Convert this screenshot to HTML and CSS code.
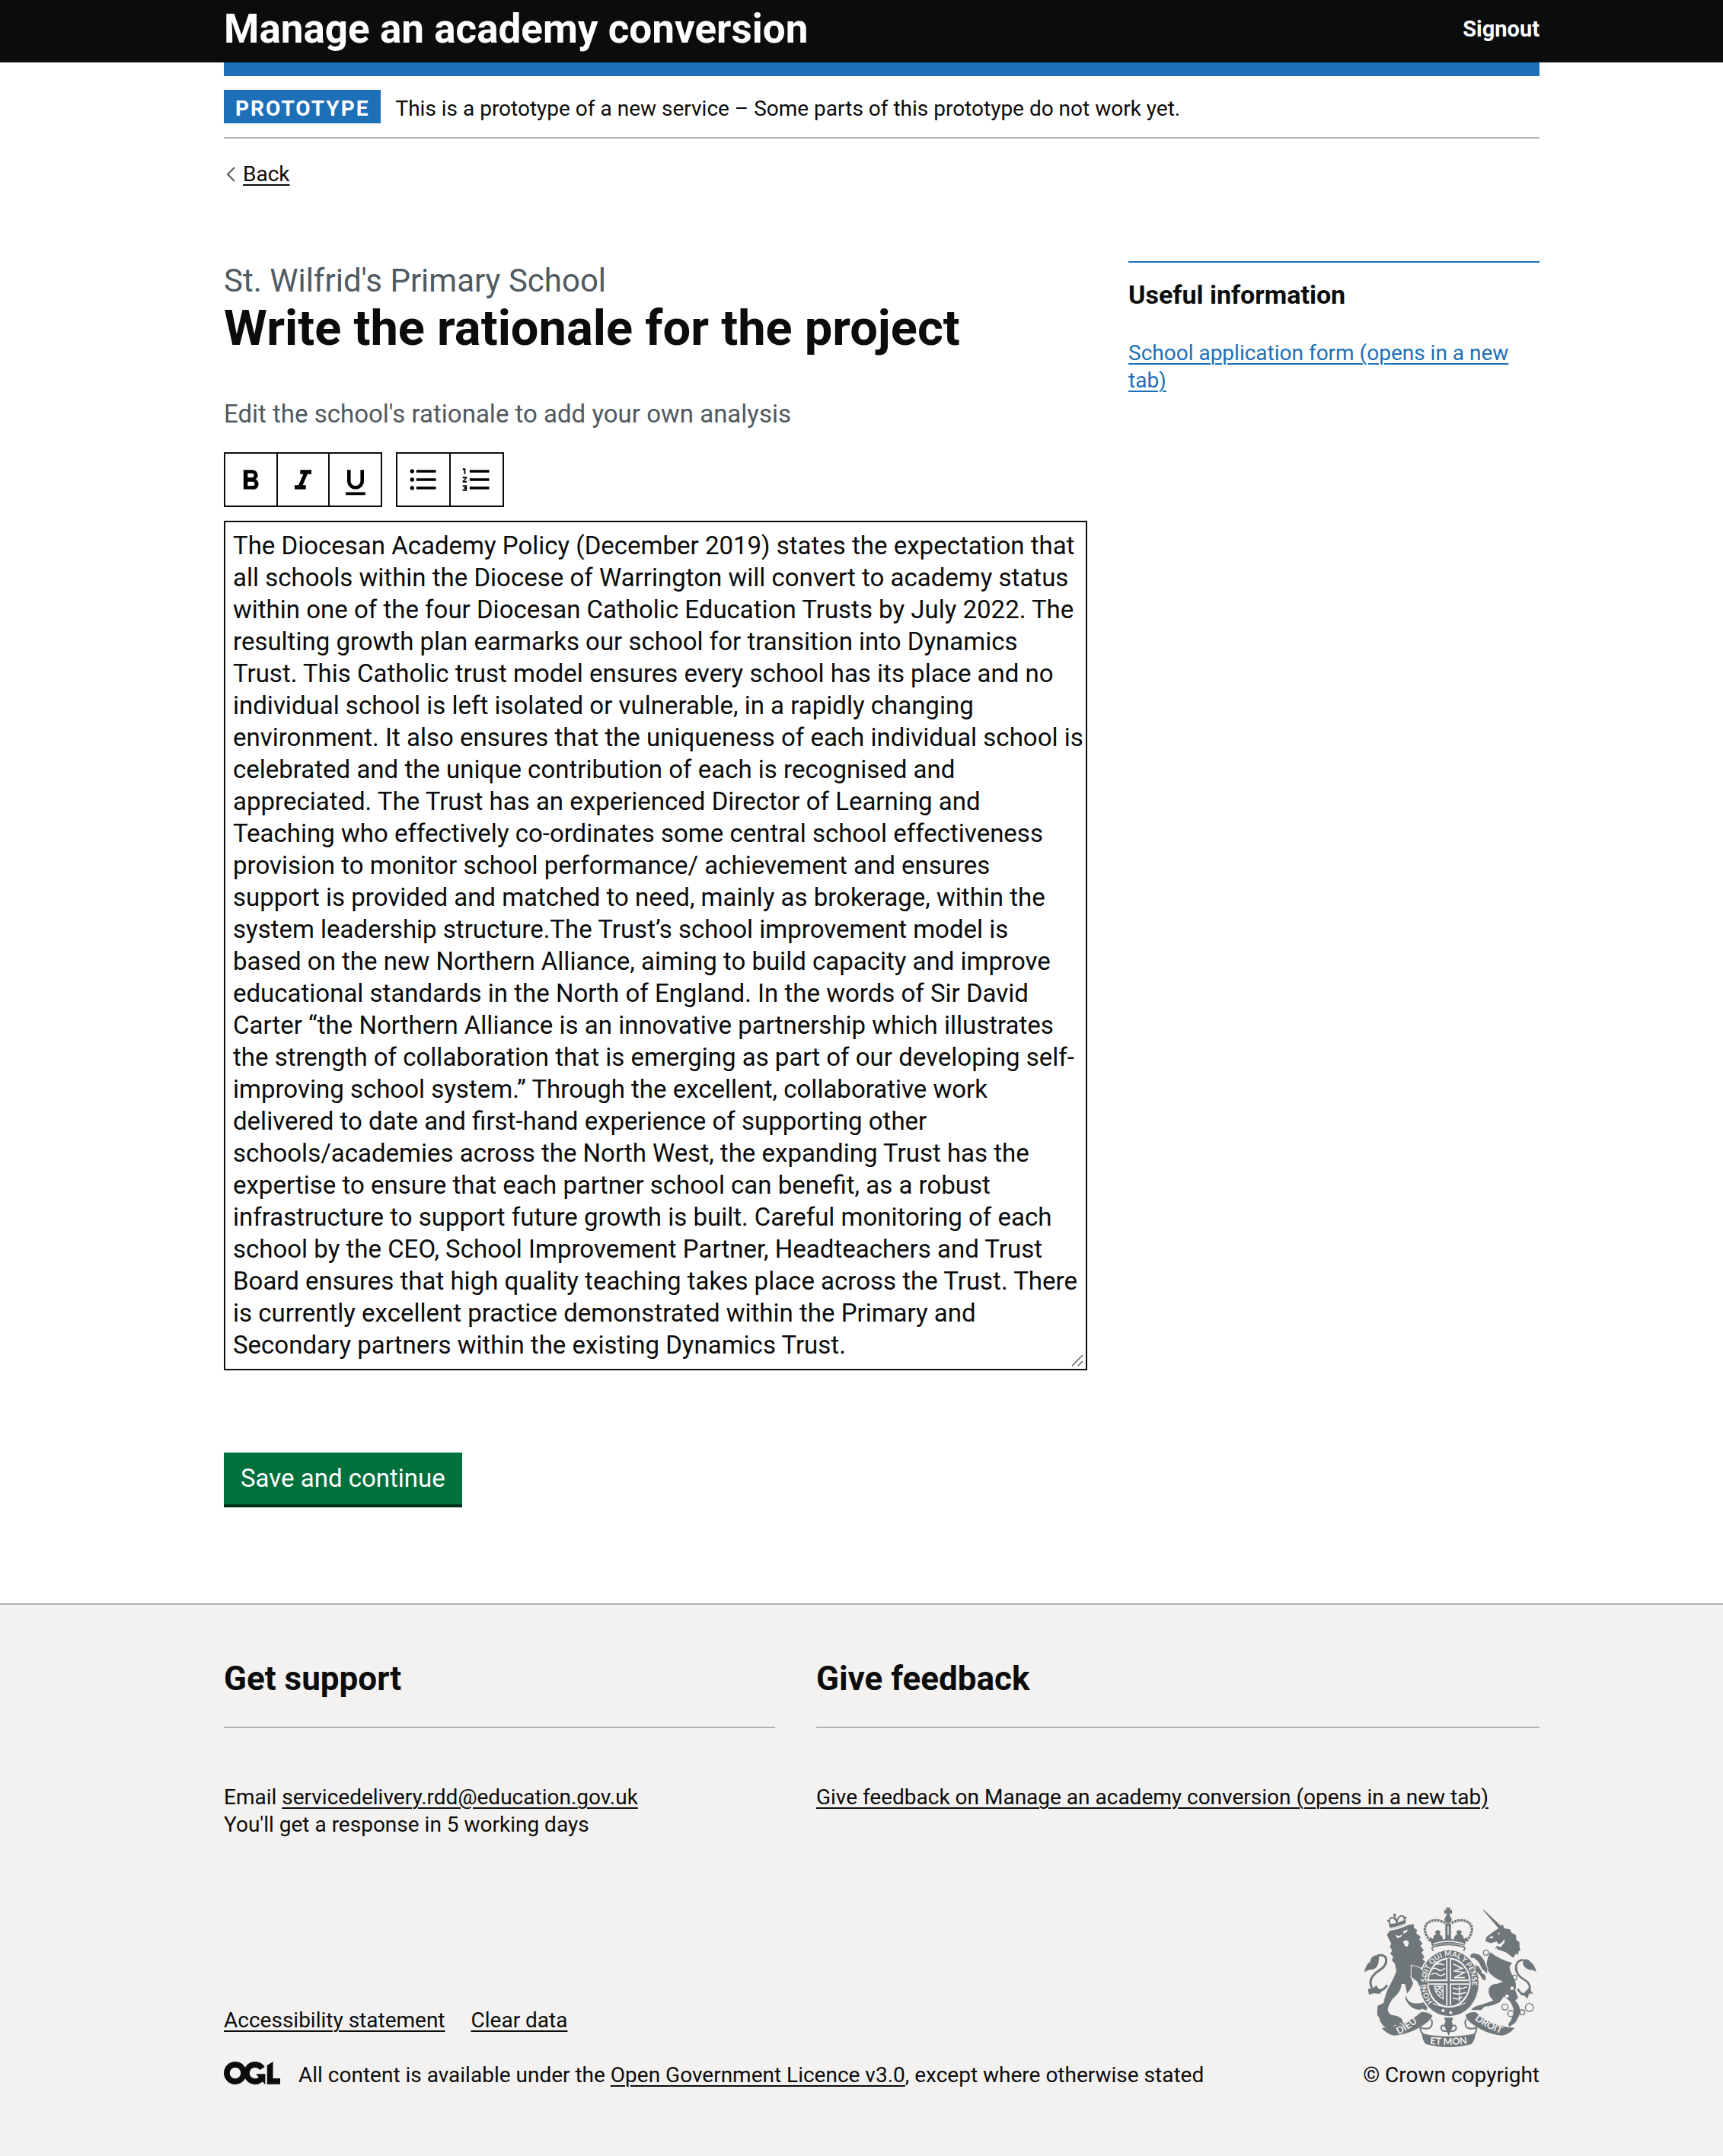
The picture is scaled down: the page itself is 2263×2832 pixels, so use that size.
FILE: index.html
```html
<!DOCTYPE html>
<html lang="en">
<head>
<meta charset="utf-8">
<meta name="viewport" content="width=device-width, initial-scale=1">
<title>Write the rationale for the project</title>
<link rel="stylesheet" href="styles.css">
</head>
<body>
<header class="header">
  <div class="container header-row">
    <a class="service-name" href="#">Manage an academy conversion</a>
    <a class="signout" href="#">Signout</a>
  </div>
</header>
<div class="container">
  <div class="header-bar"></div>
  <div class="phase-banner">
    <strong class="tag">PROTOTYPE</strong>
    <span>This is a prototype of a new service – Some parts of this prototype do not work yet.</span>
  </div>
  <a class="back-link" href="#"><svg class="back-arrow" viewBox="0 0 12 20" aria-hidden="true"><path d="M11 1 2 10l9 9" fill="none" stroke="#505a5f" stroke-width="2"/></svg><span>Back</span></a>

  <main class="columns">
    <div>
      <h1 class="page-title"><span class="caption">St. Wilfrid's Primary School</span>Write the rationale for the project</h1>
      <label class="hint" for="rationale">Edit the school's rationale to add your own analysis</label>
      <div class="toolbar" role="toolbar" aria-label="Formatting">
        <div class="tool-group tool-group-text">
          <button class="tool" type="button" aria-label="Bold"><svg viewBox="0 -1 24 24"><path d="M15.6 10.79c.97-.67 1.65-1.77 1.65-2.79 0-2.26-1.75-4-4-4H7v14h7.04c2.09 0 3.71-1.7 3.71-3.79 0-1.52-.86-2.82-2.15-3.42zM10 6.5h3c.83 0 1.5.67 1.5 1.5s-.67 1.5-1.5 1.5h-3v-3zm3.5 9H10v-3h3.5c.83 0 1.5.67 1.5 1.5s-.67 1.5-1.5 1.5z"/></svg></button>
          <button class="tool" type="button" aria-label="Italic"><svg viewBox="0 -1 24 24"><path d="M10 4v3h2.21l-3.42 8H6v3h8v-3h-2.21l3.42-8H18V4z"/></svg></button>
          <button class="tool" type="button" aria-label="Underline"><svg viewBox="0 -2 24 24"><path d="M12 17c3.31 0 6-2.69 6-6V3h-2.5v8c0 1.93-1.57 3.5-3.5 3.5S8.5 12.93 8.5 11V3H6v8c0 3.31 2.69 6 6 6zm-7 2v2h14v-2H5z"/></svg></button>
        </div>
        <div class="tool-group tool-group-list">
          <button class="tool" type="button" aria-label="Bulleted list"><svg viewBox="0 0 24 24"><path d="M4 10.5c-.83 0-1.5.67-1.5 1.5s.67 1.5 1.5 1.5 1.5-.67 1.5-1.5-.67-1.5-1.5-1.5zm0-6c-.83 0-1.5.67-1.5 1.5S3.17 7.5 4 7.5 5.5 6.83 5.5 6 4.83 4.5 4 4.5zm0 12c-.83 0-1.5.68-1.5 1.5s.68 1.5 1.5 1.5 1.5-.68 1.5-1.5-.67-1.5-1.5-1.5zM7 19h14v-2H7v2zm0-6h14v-2H7v2zm0-8v2h14V5H7z"/></svg></button>
          <button class="tool" type="button" aria-label="Numbered list"><svg viewBox="0 0 24 24"><path d="M2 17h2v.5H3v1h1v.5H2v1h3v-4H2v1zm1-9h1V4H2v1h1v3zm-1 3h1.8L2 13.1v.9h3v-1H3.2L5 10.9V10H2v1zm5-6v2h14V5H7zm0 14h14v-2H7v2zm0-6h14v-2H7v2z"/></svg></button>
        </div>
      </div>
      <div class="editor">
        <textarea id="rationale" class="textarea" rows="26">The Diocesan Academy Policy (December 2019) states the expectation that
all schools within the Diocese of Warrington will convert to academy status
within one of the four Diocesan Catholic Education Trusts by July 2022. The
resulting growth plan earmarks our school for transition into Dynamics
Trust. This Catholic trust model ensures every school has its place and no
individual school is left isolated or vulnerable, in a rapidly changing
environment. It also ensures that the uniqueness of each individual school is
celebrated and the unique contribution of each is recognised and
appreciated. The Trust has an experienced Director of Learning and
Teaching who effectively co-ordinates some central school effectiveness
provision to monitor school performance/ achievement and ensures
support is provided and matched to need, mainly as brokerage, within the
system leadership structure.The Trust’s school improvement model is
based on the new Northern Alliance, aiming to build capacity and improve
educational standards in the North of England. In the words of Sir David
Carter “the Northern Alliance is an innovative partnership which illustrates
the strength of collaboration that is emerging as part of our developing self-
improving school system.” Through the excellent, collaborative work
delivered to date and first-hand experience of supporting other
schools/academies across the North West, the expanding Trust has the
expertise to ensure that each partner school can benefit, as a robust
infrastructure to support future growth is built. Careful monitoring of each
school by the CEO, School Improvement Partner, Headteachers and Trust
Board ensures that high quality teaching takes place across the Trust. There
is currently excellent practice demonstrated within the Primary and
Secondary partners within the existing Dynamics Trust.</textarea>
        <svg class="resize-grip" viewBox="0 0 16 16" aria-hidden="true"><path d="M1 15 15 1M9 15l6-6" fill="none" stroke="#555" stroke-width="1.4"/></svg>
      </div>
      <button class="save" type="submit">Save and continue</button>
    </div>
    <aside class="related">
      <h2 class="related-title">Useful information</h2>
      <a href="#">School application form (opens in a new tab)</a>
    </aside>
  </main>
</div>

<footer class="footer">
  <div class="container">
    <div class="support">
      <section>
        <h2 class="footer-title">Get support</h2>
        <p>Email <a href="#">servicedelivery.rdd@education.gov.uk</a><br>You'll get a response in 5 working days</p>
      </section>
      <section>
        <h2 class="footer-title">Give feedback</h2>
        <p><a href="#">Give feedback on Manage an academy conversion (opens in a new tab)</a></p>
      </section>
    </div>
    <div class="meta">
      <div>
        <nav class="meta-links"><a href="#">Accessibility statement</a><a href="#">Clear data</a></nav>
        <div class="licence">
          <svg class="ogl" viewBox="0 0 483.2 195.7" role="img" aria-label="Open Government Licence"><path fill="#0b0c0c" d="M421.5 142.8V.1l-50.7 32.3v161.1h112.4v-50.7zm-122.3-9.6A47.12 47.12 0 0 1 221 97.8c0-26 21.1-47.1 47.1-47.1 16.7 0 31.4 8.7 39.7 21.8l42.7-27.2A97.63 97.63 0 0 0 268.1 0c-36.5 0-68.3 20.1-85.1 49.7A98 98 0 0 0 97.8 0C43.9 0 0 43.9 0 97.8s43.9 97.8 97.8 97.8c36.5 0 68.3-20.1 85.1-49.7a97.76 97.76 0 0 0 149.6 25.4l19.4 22.2h3v-87.8h-80l24.3 27.5zM97.8 145c-26 0-47.1-21.1-47.1-47.1s21.1-47.1 47.1-47.1 47.1 21.1 47.1 47.1S123.8 145 97.8 145"/></svg>
          <span>All content is available under the <a href="#">Open Government Licence v3.0</a>, except where otherwise stated</span>
        </div>
      </div>
      <a class="copyright" href="#">
        <svg class="crest" viewBox="66 72 678 552" aria-hidden="true">
          <defs>
            <path id="garter" d="M336 446A90 106 0 1 1 464 446"/>
            <path id="ribbon-left" d="M200 574Q248 552 296 508"/>
            <path id="ribbon-mid" d="M300 608Q397 624 498 606"/>
            <path id="ribbon-right" d="M500 516Q546 552 622 578"/>
          </defs>
          <g class="crest-fill">
            <!-- lion -->
            <path d="M155 182l10-16 36-8 44-17 17-1-2 13 14 10-4 12 18 15-6 9 13 17-8 8 13 18-9 9 12 20-9 6 12 10 4 14-26 12 18 26 14 10-6 10 12 12 4 14-14-4 4 16-20-8-14-24-22-6-6-16-8-2 12 32q-8 24-28 44 4 28 22 32 26 6 48-2l18 6 8 22-12-6-4 10-14-6-14 4q-34-4-50-34-8-14 2-32l-8-36-14 0q0 24-20 44-26 22-34 54 0 16 14 24 30 2 44 18l2 18-12-4-2 10-18-2-16 10-24-2q-18-16-22-38l-8-10 2-36 24-12q6-36 26-72 18-34 24-52l-6-30-12-14 6-12-12-14 8-12-10-14 6-12z"/>
            <path d="M66 328q6-30 24-42-2-16 20-24l14 4-2 22q-4 26-24 30-16 0-32 10z"/>
            <path d="M80 394l20 0 12-14 10 14 18 4-14 16-24-2-18 6z"/>
            <path d="M168 158l-6-18q34-4 66-18l2 18-32 12z"/>
            <path d="M180 98h10v12h-10zM156 122h9v8h-9zM224 110h8v8h-8z"/>
            <!-- unicorn -->
            <path d="M533 83l4 0 72 68-10 10z"/>
            <path d="M543 206l4-16 24-18 26-18 14-14 6 16 22 4 8 14 16 8 2 20 12 8 0 18 4 14-8 4 0 14-10-4-10 16-30-22-42-14 12-20-6-8-22 6-14-4z"/>
            <path d="M562 250Q600 280 648 292L638 306Q640 330 655 350 668 380 660 400L672 430 660 440Q682 460 680 490 672 510 660 528L638 544 632 534Q652 510 654 480 652 460 636 440L616 424Q606 438 600 446 570 462 540 464L526 478H486Q496 462 530 456L574 440Q552 420 556 396 562 374 590 374L612 366Q570 350 552 322 540 290 562 250z"/>
            <path d="M744 328q-8-30-26-42-4-10-26-8-6 20 6 30 10 12 28 12 12 2 18 8z"/>
            <path d="M716 388l8 18 8 8-16-2-8 22-10-12-20-4 16-6z"/>
          </g>
          <g class="crest-line">
            <path d="M168 142q-10-20 4-28 14-2 22 18 2-22 20-26 12 4 10 20M186 112l10 24M206 104" stroke-width="6"/>
            <path d="M116 264q34-8 36 16 2 24-28 42-34 22-34 48 2 30 24 34 26 0 42-24" stroke-width="9"/>
            <path d="M664 326q-6-42 26-46M664 308q-2 32 32 50 24 14 22 36-2 24-22 22-16-2-26-22" stroke-width="8"/>
            <g stroke-width="4">
              <circle cx="657" cy="350" r="10"/><circle cx="620" cy="466" r="12"/><circle cx="643" cy="492" r="12"/>
              <circle cx="688" cy="487" r="10"/><circle cx="716" cy="468" r="16"/><circle cx="545" cy="252" r="10"/>
            </g>
          </g>
          <g class="crest-cut">
            <path d="M188 182l16 4 12-8-6 12-14 4zM218 168l18-8-2 10-14 6zM218 208l14-6 10 10-6 16-10-2z"/>
            <path d="M556 194l12-8 8 4-10 6zM590 176l10-4-2 8zM582 222l24-8 12-16 0 14-16 18z"/>
            <circle cx="648" cy="392" r="7"/><circle cx="628" cy="423" r="7"/>
          </g>
          <path d="M166 156q30-4 66-20M566 244q34 28 78 36M570 236l12 8 4-8 8 14 10-6 2 16 12-8 2 16 14-8-2 16 14-4" fill="none" stroke="#f3f2f1" stroke-width="4"/>
          <!-- royal crown -->
          <g class="crest-line">
            <path d="M326 206Q288 160 316 134q28-20 68 0M468 206q38-46 10-72-28-20-68 0" stroke-width="10" stroke-dasharray="9 3"/>
            <path d="M396 136v62" stroke-width="22"/>
          </g>
          <g class="crest-fill">
            <path d="M386 74h20l-5 12 10-4v18l-10-4 4 14h-18l4-14-10 4V82l10 4z"/>
            <circle cx="396" cy="121" r="14"/>
            <path d="M322 190l14 8 4-14 8-4-4-12 12-6 10 6-4 12 10 6 4 14 14-4v-18l6-10 8 10v18l14 4 4-14 10-6-4-12 10-6 12 6-4 12 8 4 4 14 14-8-12 34Q396 206 332 226z"/>
          </g>
          <path d="M336 218q60-22 124 0M396 146v36" fill="none" stroke="#f3f2f1" stroke-width="4"/>
          <path d="M334 230q-4 8 4 14M460 230q4 8-4 14M334 230q62-20 126 0" class="crest-line" stroke-width="5"/>
          <!-- garter and shield -->
          <ellipse cx="400" cy="372" rx="122" ry="136" fill="#f3f2f1"/>
          <ellipse cx="400" cy="372" rx="116" ry="130" class="crest-fill"/>
          <ellipse cx="399" cy="370" rx="86" ry="99" fill="#f3f2f1"/>
          <ellipse cx="399" cy="370" rx="80" ry="92" class="crest-fill"/>
          <g fill="none" stroke="#f3f2f1">
            <path d="M328 318q16-10 28 0t28-6M330 338q14-10 26 0t28-4M340 300q16-8 40 0M416 296l36 18-34 10 42 6-40 20 42 0M414 390q20 12 56-4M414 410q24 10 52-2M414 430q20 10 38-4M440 384v60" stroke-width="5"/>
            <path d="M342 384l34 0 0 50q-30-14-34-50zM346 390l26 30M358 386l18 20M346 408l24-24M356 422l20-24" stroke-width="4"/>
            <path d="M398 280v180M320 368h158" stroke-width="20"/>
          </g>
          <path d="M398 274v188M316 368h164" class="crest-line" stroke-width="9"/>
          <path d="M324 448q76 44 152 0l-10 22q-68 32-132 0z" class="crest-fill"/>
          <path d="M336 452q64 26 128-2" fill="none" stroke="#f3f2f1" stroke-width="4"/>
          <g class="crest-cut"><circle cx="376" cy="480" r="6"/><circle cx="406" cy="488" r="6"/></g>
          <!-- forelegs laid over the garter -->
          <g class="crest-fill crest-over">
            <path d="M250 300l34 10 20 20 6 14-4 10 12 12-2 16-14-4-2 16-18-10-10-20-22-16z"/>
            <path d="M484 258l14-6 24 8 16 20 14 34-2 22-22-20-12-26-18-16-12 0-4-8z"/>
            <path d="M500 298l18 8 14 24 14 14-2 20-14-6-8-16-22-20 4-8z"/>
          </g>
          <circle cx="534" cy="328" r="7" class="crest-cut"/>
          <!-- motto ribbon -->
          <g class="crest-fill">
            <path d="M134 548q90-4 156-62 30-2 44 14-4 12-16 22-60 50-134 56-28-4-50-30z"/>
            <path d="M658 548q-90-4-154-62-30-2-40 14 4 12 14 22 58 50 130 56 28-4 50-30z"/>
            <path d="M292 570q106 24 212 0-2 26-16 42-90 24-180 0-14-14-16-42z"/>
            <path d="M380 508h36l-6 16q8 10 2 24l-14 30-14-30q-6-14 2-24z"/>
          </g>
          <g class="crest-line" stroke-width="6">
            <path d="M330 514q8 22-6 34-20 8-38-2 0 20 14 28M466 514q-8 22 6 34 20 8 36-2 0 20-10 28"/>
            <path d="M390 560q-20 4-22-12 2-14 14-8M406 560q20 4 22-12-2-14-14-8"/>
          </g>
          <g class="motto">
            <text class="motto-garter"><textPath href="#garter">HONI SOIT QUI MAL Y PENSE</textPath></text>
            <text><textPath href="#ribbon-left">DIEU</textPath></text>
            <text><textPath href="#ribbon-mid" startOffset="24">ET MON</textPath></text>
            <text><textPath href="#ribbon-right">DROIT</textPath></text>
          </g>
        </svg>
        <span>© Crown copyright</span>
      </a>
    </div>
  </div>
</footer>
</body>
</html>
```

FILE: styles.css
```css
* { box-sizing: border-box; }

body {
  margin: 0;
  background: #fff;
  color: #0b0c0c;
  font-family: Roboto, "Liberation Sans", sans-serif;
  font-size: 28px;
  line-height: 36px;
}

a {
  color: inherit;
  text-decoration: underline;
  text-decoration-thickness: 2px;
  text-underline-offset: 4px;
}

h1, h2, p { margin: 0; }

.container {
  max-width: 1781px;
  margin: 0 auto;
  padding-left: 53px;
}

.header { background: #0b0c0c; color: #fff; }
.header-row {
  display: flex;
  justify-content: space-between;
  align-items: center;
  height: 82px;
  padding-bottom: 6px;
}
.header a { font-weight: 700; text-decoration: none; }
.service-name { font-size: 53px; line-height: 60px; }
.signout { font-size: 29px; }

.header-bar { height: 18px; background: #1d70b8; }

.phase-banner {
  display: flex;
  align-items: baseline;
  gap: 19px;
  padding: 18px 0;
  border-bottom: 2px solid #b1b4b6;
}
.tag {
  padding: 7px 15px 1px;
  background: #1d70b8;
  color: #fff;
  letter-spacing: 2px;
}

.back-link {
  display: inline-flex;
  align-items: center;
  gap: 10px;
  margin-top: 29px;
  padding-left: 3px;
  text-decoration: none;
}
.back-link span {
  text-decoration: underline;
  text-decoration-thickness: 2px;
  text-underline-offset: 4px;
}
.back-arrow { width: 12px; height: 20px; }

.columns {
  display: grid;
  grid-template-columns: 21fr 10fr;
  gap: 54px;
  margin-top: 95px;
}

.page-title { font-size: 65px; line-height: 74px; font-weight: 700; }
.caption {
  display: block;
  color: #505a5f;
  font-size: 42px;
  line-height: 51px;
  font-weight: 400;
}
.hint {
  display: block;
  margin: 53px 0 27px;
  color: #505a5f;
  font-size: 33px;
  line-height: 46px;
}

.toolbar { display: flex; gap: 18px; margin-bottom: 18px; }
.tool-group {
  display: grid;
  grid-auto-flow: column;
  grid-auto-columns: 1fr;
  gap: 2px;
  height: 72px;
  border: 2px solid #0b0c0c;
  background: #0b0c0c;
}
.tool-group-text { width: 208px; }
.tool-group-list { width: 142px; }
.tool {
  display: flex;
  align-items: center;
  justify-content: center;
  padding: 0;
  border: 0;
  background: #fff;
}
.tool svg { width: 44px; height: 44px; }

.editor { position: relative; }
.textarea {
  display: block;
  width: 100%;
  padding: 10px 8px 10px 10px;
  border: 2px solid #0b0c0c;
  border-radius: 0;
  background: #fff;
  color: #0b0c0c;
  font: 33px/42px Roboto, "Liberation Sans", sans-serif;
  white-space: pre;
  overflow: hidden;
  resize: none;
}
.resize-grip {
  position: absolute;
  right: 5px;
  bottom: 5px;
  width: 16px;
  height: 16px;
}

.save {
  display: block;
  margin-top: 108px;
  padding: 13px 22px;
  border: 0;
  background: #00703c;
  box-shadow: 0 4px 0 #002d18;
  color: #fff;
  font: 33px/42px Roboto, "Liberation Sans", sans-serif;
}

.related {
  align-self: start;
  padding-top: 20px;
  border-top: 2px solid #1d70b8;
}
.related a { color: #1d70b8; }
.related-title { margin-bottom: 37px; font-size: 34px; line-height: 44px; }

.footer {
  margin-top: 130px;
  padding: 72px 0 90px;
  border-top: 2px solid #b1b4b6;
  background: #f3f2f1;
}
.support {
  display: grid;
  grid-template-columns: 16fr 21fr;
  gap: 54px;
}
.footer-title {
  margin-bottom: 73px;
  padding-bottom: 38px;
  border-bottom: 2px solid #b1b4b6;
  font-size: 44px;
  line-height: 50px;
}
.meta {
  display: flex;
  justify-content: space-between;
  align-items: flex-end;
  margin-top: 90px;
}
.meta-links { display: flex; gap: 34px; margin-bottom: 36px; }
.licence { display: flex; align-items: flex-start; gap: 24px; }
.ogl { width: 74px; height: 30px; }
.copyright {
  display: flex;
  flex-direction: column;
  align-items: flex-end;
  gap: 19px;
  text-decoration: none;
}
.crest { width: 226px; height: 184px; margin-right: 4px; }
.crest-fill { fill: #6f777b; }
.crest-line { fill: none; stroke: #6f777b; }
.crest-cut { fill: #f3f2f1; }
.crest-over { stroke: #f3f2f1; stroke-width: 3px; }
.motto {
  fill: #f3f2f1;
  font: 700 38px Lato, sans-serif;
}
.motto-garter { font-size: 29px; }
```
